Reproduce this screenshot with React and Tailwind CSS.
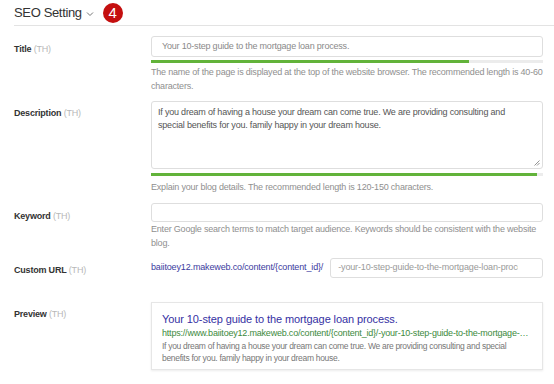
import React from "react";

const Label = ({ children, className = "" }) => (
  <div className={"w-[137px] shrink-0 text-[9px] leading-[12px] tracking-[-0.2px] text-[#333] " + className}>
    <span className="font-bold">{children}</span>{" "}
    <span className="text-[#b8b8b8]">(TH)</span>
  </div>
);

export default function App() {
  return (
    <div className="w-[554px] h-[384px] bg-white overflow-hidden font-['Liberation_Sans',Arial,sans-serif]">
      <div className="ml-[14px] h-[26px] border-b border-[#e3e3e3] flex items-center">
        <span className="text-[13px] tracking-[-0.35px] text-[#333] leading-none">SEO Setting</span>
        <svg width="8" height="6" viewBox="0 0 8 6" className="ml-[4px] mt-[2px]">
          <path d="M1 1.5 L4 4.5 L7 1.5" fill="none" stroke="#777" strokeWidth="1" />
        </svg>
        <div className="ml-[9px] w-[20px] h-[20px] rounded-full bg-[#c40f0f] text-white text-[15px] leading-none flex items-center justify-center">
          4
        </div>
      </div>

      <div className="ml-[14px] w-[529px]">
        {/* Title */}
        <div className="flex mt-[10px]">
          <Label className="pt-[7px]">Title</Label>
          <div className="w-[392px] min-w-0">
            <div className="h-[21px] border border-[#dedede] rounded-[3px] flex items-center px-[10px] text-[9px] tracking-[-0.2px] text-[#8a8a8a]">
              Your 10-step guide to the mortgage loan process.
            </div>
            <div className="mt-[3px] h-[3px] bg-[#ececec]">
              <div className="h-full bg-[#62b33a]" style={{ width: "81%" }} />
            </div>
            <p className="mt-[2px] text-[9px] leading-[14px] tracking-[-0.2px] text-[#8f8f8f]">
              The name of the page is displayed at the top of the website browser. The recommended length is 40-60 characters.
            </p>
          </div>
        </div>

        {/* Description */}
        <div className="flex mt-[8px]">
          <Label className="pt-[6px]">Description</Label>
          <div className="w-[392px] min-w-0">
            <div className="relative h-[68px] border border-[#dedede] rounded-[3px] pl-[6px] pr-[24px] pt-[4px] text-[9px] leading-[13px] tracking-[-0.2px] text-[#555]">
              If you dream of having a house your dream can come true. We are providing consulting and special benefits for you. family happy in your dream house.
              <svg width="6" height="6" viewBox="0 0 6 6" className="absolute right-[2px] bottom-[2px]">
                <path d="M5.5 0.5 L0.5 5.5 M5.5 3 L3 5.5" stroke="#777" strokeWidth="0.8" />
              </svg>
            </div>
            <div className="mt-[4px] h-[3px] bg-[#ececec]">
              <div className="h-full bg-[#62b33a]" style={{ width: "98.5%" }} />
            </div>
            <p className="mt-[4px] text-[9px] leading-[14px] tracking-[-0.2px] text-[#8f8f8f]">
              Explain your blog details. The recommended length is 120-150 characters.
            </p>
          </div>
        </div>

        {/* Keyword */}
        <div className="flex mt-[9px]">
          <Label className="pt-[7px]">Keyword</Label>
          <div className="w-[392px] min-w-0">
            <div className="h-[19px] border border-[#dedede] rounded-[3px]" />
            <p className="mt-0 text-[9px] leading-[14px] tracking-[-0.2px] text-[#8f8f8f]">
              Enter Google search terms to match target audience. Keywords should be consistent with the website blog.
            </p>
          </div>
        </div>

        {/* Custom URL */}
        <div className="flex mt-[8px] items-center">
          <Label className="pt-[4px]">Custom URL</Label>
          <div className="w-[392px] min-w-0 flex items-center">
            <span className="text-[9px] tracking-[-0.15px] text-[#3b3b9e] whitespace-nowrap">
              baiitoey12.makeweb.co/content/{"{content_id}"}/
            </span>
            <div className="ml-[7px] flex-1 min-w-0 h-[20px] border border-[#dedede] rounded-[3px] flex items-center pl-[7px] pr-[24px] text-[9px] tracking-[-0.15px] text-[#9a9a9a] overflow-hidden whitespace-nowrap">
              <span className="overflow-hidden">-your-10-step-guide-to-the-mortgage-loan-process</span>
            </div>
          </div>
        </div>

        {/* Preview */}
        <div className="flex mt-[24px]">
          <Label className="pt-[6px]">Preview</Label>
          <div className="w-[392px] min-w-0 h-[68px] border border-[#e6e6e6] shadow-[0_1px_2px_rgba(0,0,0,0.08)] pl-[10px] pr-[12px] pt-[8px] overflow-hidden">
            <div className="text-[11px] leading-[16px] tracking-[-0.1px] text-[#3530a3] whitespace-nowrap">
              Your 10-step guide to the mortgage loan process.
            </div>
            <div className="text-[9px] leading-[12px] tracking-[-0.2px] text-[#3d8a3d] whitespace-nowrap overflow-hidden text-ellipsis">
              https://www.baiitoey12.makeweb.co/content/{"{content_id}"}/-your-10-step-guide-to-the-mortgage-loan-process
            </div>
            <div className="mt-[1px] pr-[6px] text-[8.5px] leading-[12px] tracking-[-0.3px] text-[#777]">
              If you dream of having a house your dream can come true. We are providing consulting and special benefits for you. family happy in your dream house.
            </div>
          </div>
        </div>
      </div>
    </div>
  );
}
